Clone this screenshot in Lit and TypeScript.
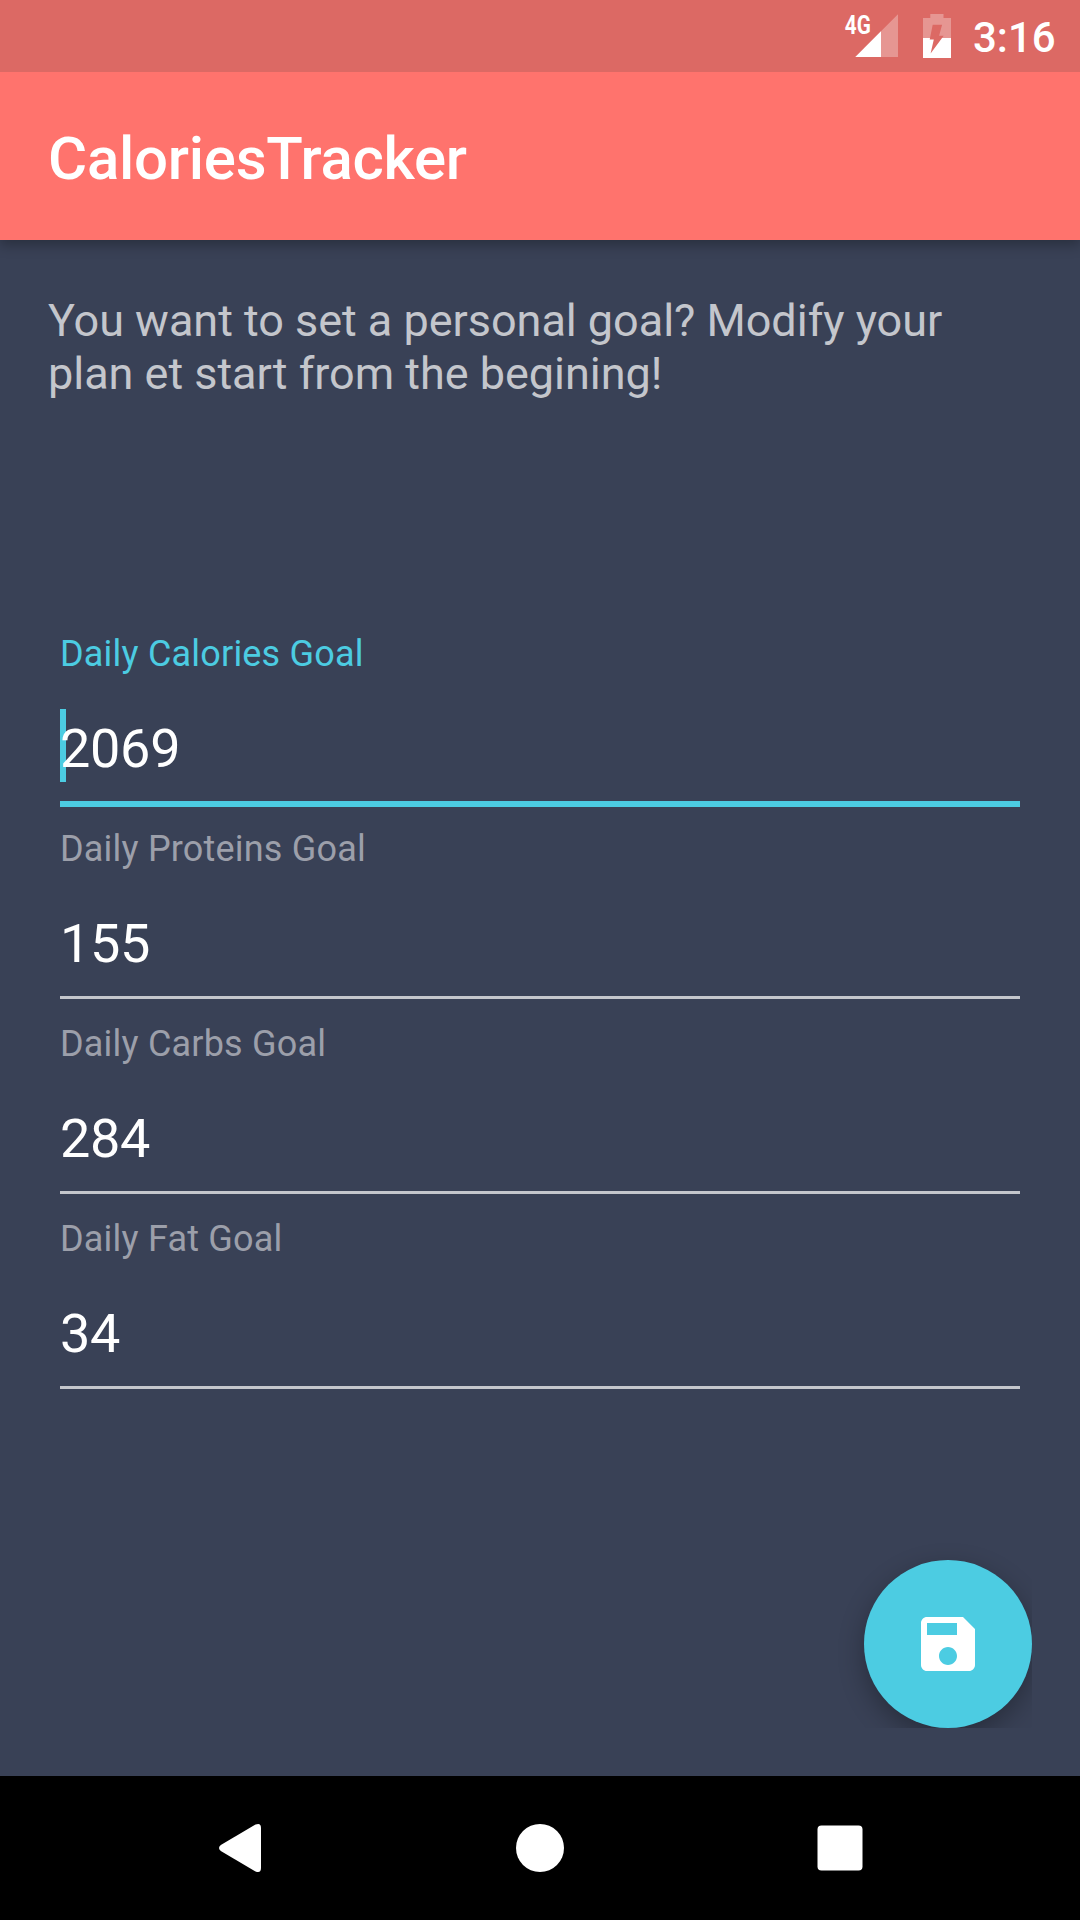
import { LitElement, html, css, svg, nothing } from "lit";
import { customElement, property } from "lit/decorators.js";
import { classMap } from "lit/directives/class-map.js";

@customElement("status-bar")
class StatusBar extends LitElement {
  static styles = css`
    :host { display: flex; justify-content: flex-end; height: 72px; background: #dc6964; }
    .icons { display: block; width: 120px; height: 72px; }
    .network { font: 700 26px Roboto, sans-serif; }
    .clock {
      margin: 0 24px 0 15px;
      width: 83px;
      font: 500 42px/76px Roboto, sans-serif;
      color: #fff;
      white-space: nowrap;
    }
  `;
  render() {
    return html`
      <svg class="icons" viewBox="838 0 120 72" fill="#fff">
        <path d="M898 14.3V57H855.3z" fill-opacity=".3" />
        <path d="M881 31.3V57H855.3z" />
        <text class="network" x="844.8" y="33.5" textLength="26" lengthAdjust="spacingAndGlyphs">4G</text>
        <mask id="bolt">
          <rect x="915" y="0" width="45" height="72" fill="#fff" />
          <path d="M932.7 24.8h9.4l-3 10.9h4.6L930.6 53.4l3.2-14h-4.1z" fill="#000" />
        </mask>
        <g mask="url(#bolt)">
          <path d="M923 18h7.3v-4h13.2v4h7.5v20h-28z" fill-opacity=".3" />
          <path d="M923 38h28v20h-28z" />
        </g>
      </svg>
      <span class="clock">3:16</span>
    `;
  }
}

@customElement("goal-field")
class GoalField extends LitElement {
  @property() label = "";
  @property() value = "";
  @property({ type: Boolean }) active = false;

  static styles = css`
    :host { display: flex; flex-direction: column; height: 195px; font-family: Roboto, sans-serif; }
    .label { font-size: 36px; line-height: 42px; letter-spacing: 0.2px; color: #9c9faa; }
    .label.active { color: #4ccce2; }
    .value {
      position: relative;
      margin: 42px 0 21px;
      font-size: 54px;
      line-height: 63px;
      letter-spacing: -0.3px;
      color: #fff;
    }
    .digits { position: relative; }
    .caret { position: absolute; left: 0; top: -8px; width: 6px; height: 73px; background: #4ccce2; }
    .line { height: 3px; background: #c4c6cc; }
    .line.active { height: 6px; background: #4ccce2; }
  `;
  render() {
    const state = { active: this.active };
    return html`
      <div class=${classMap({ label: true, ...state })}>${this.label}</div>
      <div class="value">
        ${this.active ? html`<span class="caret"></span>` : nothing}
        <span class="digits">${this.value}</span>
      </div>
      <div class=${classMap({ line: true, ...state })}></div>
    `;
  }
}

const goals = [
  { label: "Daily Calories Goal", value: "2069" },
  { label: "Daily Proteins Goal", value: "155" },
  { label: "Daily Carbs Goal", value: "284" },
  { label: "Daily Fat Goal", value: "34" },
];

const navIcons = [
  svg`<path d="M51.5 12.6Q57 10.4 57 16V56Q57 61.6 51.5 59.4L16.8 39Q13.2 36 16.8 33z" />`,
  svg`<circle cx="36" cy="36" r="24" />`,
  svg`<rect x="13.5" y="13.4" width="45" height="45" rx="4" />`,
];

@customElement("app-root")
class AppRoot extends LitElement {
  static styles = css`
    :host {
      display: flex;
      flex-direction: column;
      width: 1080px;
      height: 1920px;
      overflow: hidden;
      background: #394156;
      font-family: Roboto, sans-serif;
    }
    .toolbar {
      display: flex;
      align-items: center;
      box-sizing: border-box;
      height: 168px;
      padding: 0 48px;
      background: #ff736d;
      box-shadow: 0 5px 12px rgba(0, 0, 0, 0.28);
      clip-path: inset(0 0 -30px 0);
    }
    .title {
      margin: 6px 0 0;
      font-size: 60px;
      font-weight: 500;
      line-height: 70px;
      letter-spacing: -0.26px;
      color: #fff;
    }
    .content { position: relative; flex: 1; }
    .intro { margin: 54px 48px 0; font-size: 45px; line-height: 53px; letter-spacing: -0.03px; color: #c4c6cc; }
    .fields { display: flex; flex-direction: column; margin: 233px 60px 0; }
    .fab-clip {
      position: absolute;
      right: 48px;
      bottom: 48px;
      clip-path: inset(-40px 0 0 -40px);
    }
    .fab {
      display: grid;
      place-items: center;
      width: 168px;
      height: 168px;
      padding: 0;
      border: 0;
      border-radius: 50%;
      background: #4ccce2;
      box-shadow: 0 9px 26px rgba(0, 0, 0, 0.3);
    }
    .save { width: 72px; height: 72px; }
    .nav { display: flex; justify-content: center; align-items: center; gap: 228px; height: 144px; background: #000; }
    .nav-icon { width: 72px; height: 72px; }
  `;
  render() {
    return html`
      <status-bar></status-bar>
      <header class="toolbar"><h1 class="title">CaloriesTracker</h1></header>
      <main class="content">
        <p class="intro">You want to set a personal goal? Modify your<br />plan et start from the begining!</p>
        <section class="fields">
          ${goals.map((g, i) => html`<goal-field .label=${g.label} .value=${g.value} .active=${i === 0}></goal-field>`)}
        </section>
        <div class="fab-clip">
          <button class="fab" aria-label="Save">
            <svg class="save" viewBox="0 0 24 24" fill="#fff">
              <path d="M17 3H5c-1.11 0-2 .9-2 2v14c0 1.1.89 2 2 2h14c1.1 0 2-.9 2-2V7l-4-4zm-5 16c-1.66 0-3-1.34-3-3s1.34-3 3-3 3 1.34 3 3-1.34 3-3 3zm3-10H5V5h10v4z" />
            </svg>
          </button>
        </div>
      </main>
      <nav class="nav">
        ${navIcons.map((icon) => html`<svg class="nav-icon" viewBox="0 0 72 72" fill="#fff">${icon}</svg>`)}
      </nav>
    `;
  }
}
